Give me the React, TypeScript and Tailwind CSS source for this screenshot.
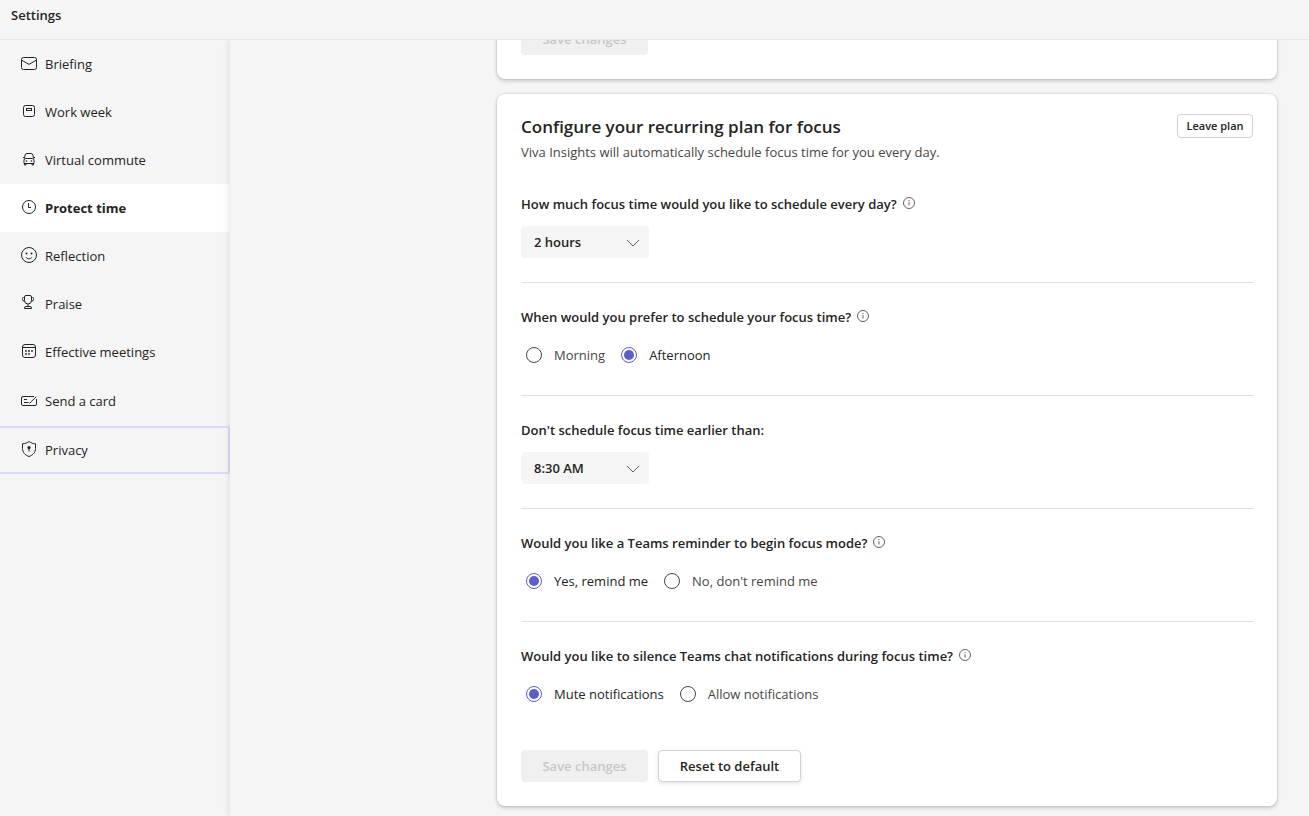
import { useState, type ReactNode } from "react";

const navItems: { label: string; icon: ReactNode; spaced?: boolean }[] = [
  {
    label: "Briefing",
    icon: (
      <>
        <rect x="2.5" y="3.5" width="15" height="12" rx="2" />
        <path d="M2.7 6.2 10 10.4l7.3-4.2" />
      </>
    ),
  },
  {
    label: "Work week",
    icon: (
      <>
        <rect x="4.5" y="3.5" width="11" height="11" rx="2" />
        <rect x="7.5" y="6.5" width="5" height="2" />
      </>
    ),
  },
  {
    label: "Virtual commute",
    icon: (
      <>
        <path d="M5.5 8.5 6 5.2A2 2 0 0 1 8 3.500h4a2 2 0 0 1 2 1.700l.500 3.300" />
        <path d="M6.500 8.500h7a1.500 1.500 0 0 1 1.500 1.500v3.500H5V10a1.500 1.500 0 0 1 1.500-1.500zM4 7.500h1.500M14.500 7.500H16M5.500 13.500v1.500h1.500v-1.500M13 13.500v1.500h1.500v-1.500" />
        <circle cx="7.5" cy="11" r=".8" fill="currentColor" stroke="none" />
        <circle cx="12.5" cy="11" r=".8" fill="currentColor" stroke="none" />
      </>
    ),
  },
  {
    label: "Protect time",
    icon: (
      <>
        <circle cx="10" cy="9" r="6.5" />
        <path d="M9.5 5v4.5H12" />
      </>
    ),
  },
  {
    label: "Reflection",
    icon: (
      <>
        <circle cx="10" cy="9" r="7.5" />
        <path d="M7 11.2c.8 1.1 1.8 1.6 3 1.6s2.2-.5 3-1.6" />
        <circle cx="7.5" cy="7.5" r="1" fill="currentColor" stroke="none" />
        <circle cx="12.5" cy="7.5" r="1" fill="currentColor" stroke="none" />
      </>
    ),
  },
  {
    label: "Praise",
    icon: (
      <>
        <path d="M5.500 3a1.500 1.500 0 0 1 1.500-1.500h4A1.500 1.500 0 0 1 12.500 3v3.500a3.500 3.500 0 0 1-7 0z" />
        <path d="M5.500 3.500h-1a1 1 0 0 0-1 1v.800a2 2 0 0 0 2 2M12.500 3.500h1a1 1 0 0 1 1 1v.800a2 2 0 0 1-2 2M9 10v2.500" />
        <path d="M5.500 14.500v-.5A1.500 1.500 0 0 1 7 12.500h4a1.500 1.500 0 0 1 1.500 1.500v.5z" />
      </>
    ),
  },
  {
    label: "Effective meetings",
    icon: (
      <>
        <rect x="3.5" y="2.5" width="13" height="13" rx="2.5" />
        <path d="M3.5 5.5h13" />
        <g fill="currentColor" stroke="none">
          <circle cx="7" cy="9" r=".9" />
          <circle cx="10" cy="9" r=".9" />
          <circle cx="13" cy="9" r=".9" />
          <circle cx="7" cy="12" r=".9" />
          <circle cx="10" cy="12" r=".9" />
        </g>
      </>
    ),
  },
  {
    label: "Send a card",
    spaced: true,
    icon: (
      <>
        <path d="M15 5.5H4A1.5 1.5 0 0 0 2.5 7v6A1.5 1.500 0 0 0 4 14.500h12a1.500 1.500 0 0 0 1.500-1.500V8" />
        <path d="M5 8.5h3M5 11.5h4.500M17.300 5.700l-5.500 5.300-1.300 1.500" />
      </>
    ),
  },
  {
    label: "Privacy",
    spaced: true,
    icon: (
      <>
        <path d="M10 1.5c2 1.500 4 2.200 6.500 2.300V8.500c0 3.800-2.300 6.500-6.500 8-4.200-1.500-6.500-4.200-6.500-8V3.800C6 3.700 8 3 10 1.500z" />
        <path d="M10 8v3.500" />
        <circle cx="10" cy="7.6" r="1.6" fill="currentColor" stroke="none" />
      </>
    ),
  },
];

function Question({
  id,
  text,
  info,
  htmlFor,
  last,
  children,
}: {
  id: string;
  text: string;
  info?: boolean;
  htmlFor?: string;
  last?: boolean;
  children: ReactNode;
}) {
  const textClass = "text-[13px] leading-5 font-semibold";
  return (
    <section className={last ? "pt-6" : "border-b border-[#e0e0e0] py-6"}>
      <div className="mb-3 flex h-5 items-center gap-1.5">
        {htmlFor ? (
          <label id={id} htmlFor={htmlFor} className={textClass}>
            {text}
          </label>
        ) : (
          <h3 id={id} className={textClass}>
            {text}
          </h3>
        )}
        {info && (
          <button type="button" aria-label="More information" className="mb-0.5 text-[#616161]">
            <svg viewBox="0 0 12 12" className="size-3" fill="none" stroke="currentColor">
              <circle cx="6" cy="6" r="5.5" />
              <path d="M6 5.2v3.300" />
              <circle cx="6" cy="3.6" r=".65" fill="currentColor" stroke="none" />
            </svg>
          </button>
        )}
      </div>
      {children}
    </section>
  );
}

function Dropdown({ id, options, initial }: { id: string; options: string[]; initial: string }) {
  return (
    <div className="relative w-32">
      <select
        id={id}
        defaultValue={initial}
        className="h-8 w-full appearance-none rounded bg-[#f5f5f5] pt-0.5 pr-8 pl-[13px] text-[13px] font-semibold"
      >
        {options.map((option) => (
          <option key={option}>{option}</option>
        ))}
      </select>
      <svg
        viewBox="0 0 14 8"
        className="pointer-events-none absolute top-[13px] right-[9px] h-2 w-3.5 text-[#616161]"
        fill="none"
        stroke="currentColor"
      >
        <path d="M1 1l6 6 6-6" />
      </svg>
    </div>
  );
}

function RadioPair({ name, options, initial }: { name: string; options: string[]; initial: string }) {
  const [value, setValue] = useState(initial);
  return (
    <div role="radiogroup" aria-labelledby={name} className="flex h-8 items-center gap-4 pl-[5px]">
      {options.map((option) => (
        <label
          key={option}
          className={
            value === option
              ? "flex items-center gap-3 text-[13px] leading-5 text-[#242424]"
              : "flex items-center gap-3 text-[13px] leading-5 text-[#484644]"
          }
        >
          <input
            type="radio"
            name={name}
            checked={value === option}
            onChange={() => setValue(option)}
            className="size-4 appearance-none rounded-full border border-[#484644] bg-clip-content p-[2px] checked:border-[#5b5fc7] checked:bg-[#5b5fc7]"
          />
          {option}
        </label>
      ))}
    </div>
  );
}

function SaveButton() {
  return (
    <button
      type="button"
      disabled
      className="h-8 w-[127px] rounded bg-[#f0f0f0] pt-0.5 text-[13px] font-semibold text-[#c7c7c7]"
    >
      Save changes
    </button>
  );
}

const cardClass = "rounded-lg bg-white px-6 shadow-[0_0_2px_rgba(0,0,0,0.2),0_2px_4px_rgba(0,0,0,0.18)]";

export default function App() {
  return (
    <div className="flex h-screen flex-col bg-[#f5f5f5] font-['Open_Sans',sans-serif] text-[#242424]">
      <header className="z-10 h-10 shrink-0 border-b border-[#e8e8e8] bg-[#f5f5f5] px-[11px] pt-[5px]">
        <h1 className="text-[13px] leading-5 font-semibold">Settings</h1>
      </header>

      <div className="flex min-h-0 grow">
        <nav aria-label="Settings" className="w-[230px] shrink-0">
          {navItems.map(({ label, icon, spaced }) => (
            <a
              key={label}
              href="#"
              aria-current={label === "Protect time" ? "page" : undefined}
              className={[
                "flex h-12 items-center gap-1.5 border-y-2 border-r-2 pl-[19px] text-[13px] leading-5",
                spaced ? "mt-px" : "",
                label === "Privacy" ? "border-[#dadcfa]" : "border-transparent",
                label === "Protect time" ? "bg-white font-bold" : "",
              ].join(" ")}
            >
              <svg viewBox="0 0 20 20" className="size-5 shrink-0" fill="none" stroke="currentColor">
                {icon}
              </svg>
              {label}
            </a>
          ))}
        </nav>

        <main className="relative flex min-w-0 grow flex-col-reverse overflow-y-auto shadow-[0_0_8px_rgba(0,0,0,0.12)] [scrollbar-width:none]">
          <div className="mr-8 ml-auto flex w-full max-w-[780px] flex-col gap-[15px] pb-2.5">
            <div className={`${cardClass} py-6`}>
              <SaveButton />
            </div>

            <form className={`${cardClass} pt-5 pb-6`}>
              <div className="mb-2 flex items-start justify-between">
                <div>
                  <h2 className="text-[17px] leading-[26px] font-semibold">Configure your recurring plan for focus</h2>
                  <p className="mt-0.5 text-[13px] leading-5 text-[#484644]">
                    Viva Insights will automatically schedule focus time for you every day.
                  </p>
                </div>
                <button
                  type="button"
                  className="h-6 w-[76px] rounded border border-[#d1d1d1] bg-white pt-px text-[11px] font-semibold"
                >
                  Leave plan
                </button>
              </div>

              <Question
                id="amount-label"
                htmlFor="amount"
                text="How much focus time would you like to schedule every day?"
                info
              >
                <Dropdown id="amount" options={["1 hour", "2 hours", "3 hours", "4 hours"]} initial="2 hours" />
              </Question>
              <Question id="time-of-day" text="When would you prefer to schedule your focus time?" info>
                <RadioPair name="time-of-day" options={["Morning", "Afternoon"]} initial="Afternoon" />
              </Question>
              <Question id="earliest-label" htmlFor="earliest" text="Don't schedule focus time earlier than:">
                <Dropdown id="earliest" options={["8:00 AM", "8:30 AM", "9:00 AM", "9:30 AM"]} initial="8:30 AM" />
              </Question>
              <Question id="reminder" text="Would you like a Teams reminder to begin focus mode?" info>
                <RadioPair
                  name="reminder"
                  options={["Yes, remind me", "No, don't remind me"]}
                  initial="Yes, remind me"
                />
              </Question>
              <Question
                id="silence"
                text="Would you like to silence Teams chat notifications during focus time?"
                info
                last
              >
                <RadioPair
                  name="silence"
                  options={["Mute notifications", "Allow notifications"]}
                  initial="Mute notifications"
                />
              </Question>

              <div className="mt-10 flex gap-2.5">
                <SaveButton />
                <button
                  type="reset"
                  className="h-8 w-[143px] rounded border border-[#d1d1d1] bg-white pt-0.5 text-[13px] font-semibold shadow-[0_2px_4px_rgba(0,0,0,0.1)]"
                >
                  Reset to default
                </button>
              </div>
            </form>
          </div>
        </main>
      </div>
    </div>
  );
}
